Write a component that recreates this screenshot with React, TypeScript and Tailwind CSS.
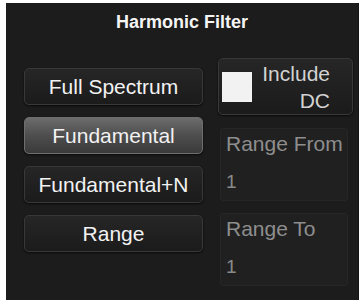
import React from "react";

function Btn({ label, selected }: { label: string; selected?: boolean }) {
  return (
    <div
      className={
        selected
          ? "h-[37px] rounded-[5px] border border-[#6e6e6e] bg-gradient-to-b from-[#6c6c6c] via-[#4e4e4e] to-[#3a3a3a] flex items-center justify-center text-[21px] text-[#f2f2f2] shadow-[0_1px_2px_#0a0a0a]"
          : "h-[37px] rounded-[5px] border border-[#383838] bg-gradient-to-b from-[#262626] to-[#1b1b1b] flex items-center justify-center text-[21px] text-[#f2f2f2] shadow-[0_1px_2px_#0a0a0a]"
      }
    >
      {label}
    </div>
  );
}

function Field({ label, value }: { label: string; value: string }) {
  return (
    <div className="h-[73px] w-[128px] ml-[2px] rounded-[3px] border border-[#262626] bg-[#202020] flex flex-col pl-[5px] pt-[2px]">
      <div className="text-[21px] leading-[26px] text-[#8e8e8e] whitespace-nowrap">{label}</div>
      <div className="text-[19px] leading-[26px] text-[#8a8a8a] mt-[12px]">{value}</div>
    </div>
  );
}

export default function App() {
  return (
    <div className="w-[364px] h-[305px] bg-white pl-[6px] pt-[3px]" style={{ fontFamily: '"Liberation Sans", Arial, sans-serif' }}>
      <div className="w-[353px] h-[297px] bg-[#1c1c1c] border-r border-[#141414] flex flex-col">
        <div className="h-[38px] flex items-center justify-center text-[18px] font-bold text-[#f4f4f4]">
          Harmonic Filter
        </div>
        <div className="flex pl-[18px] pt-[17px] gap-[15px]">
          <div className="w-[179px] flex flex-col gap-[12px] pt-[10px]">
            <Btn label="Full Spectrum" />
            <Btn label="Fundamental" selected />
            <Btn label="Fundamental+N" />
            <Btn label="Range" />
          </div>
          <div className="w-[135px] flex flex-col">
            <div className="h-[57px] rounded-[5px] border border-[#383838] bg-gradient-to-b from-[#262626] to-[#1b1b1b] shadow-[0_1px_2px_#0a0a0a] flex items-center pl-[3px] pr-[22px]">
              <div className="w-[30px] h-[30px] bg-[#f2f2f2] mt-[1px]" />
              <div className="flex-1 text-right text-[21px] leading-[27px] text-[#d2d2d2]">
                Include<br />DC
              </div>
            </div>
            <div className="mt-[13px]">
              <Field label="Range From" value="1" />
            </div>
            <div className="mt-[12px]">
              <Field label="Range To" value="1" />
            </div>
          </div>
        </div>
      </div>
    </div>
  );
}
